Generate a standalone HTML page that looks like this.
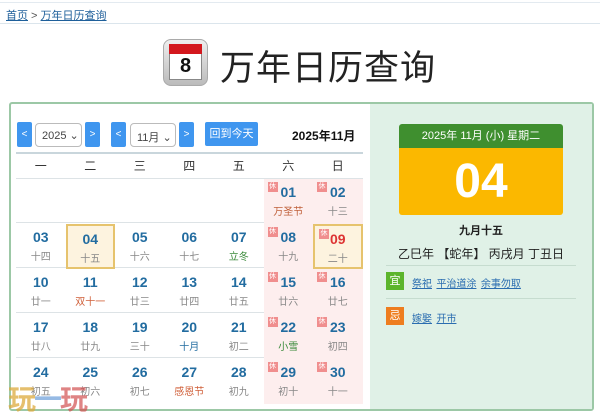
<!DOCTYPE html>
<html><head><meta charset="utf-8"><style>
*{margin:0;padding:0;box-sizing:border-box}
body{width:600px;height:412px;background:#fff;font-family:"Liberation Sans","Noto Sans CJK SC",sans-serif;position:relative;overflow:hidden;color:#333}
.abs{position:absolute}
.crumb{left:0;top:2px;width:600px;height:22px;border-top:1px solid #e3eaf0;border-bottom:1px solid #dbe5ec;font-size:11px;padding:4px 6px;color:#555}
.crumb a{color:#1e5f9a;text-decoration:underline}
.title{left:220px;top:40px;font-size:35px;color:#222;letter-spacing:1px}
.box{left:9px;top:102px;width:585px;height:309px;border:2px solid #9cc8a6;border-radius:3px;background:#fff}
.right{left:370px;top:104px;width:222px;height:305px;background:#e0f1e7}
.btn{background:#3f96ef;color:#fff;font-size:10px;text-align:center;border-radius:2px}
.sel{border:1px solid #bbb;border-radius:4px;background:#fff;font-size:11px;color:#444;padding:5px 0 0 6px}
.cell{position:absolute;width:49.5px;height:45px;text-align:center}
.n{font-size:14px;font-weight:bold;color:#226ca0;margin-top:5px;line-height:16px}
.l{font-size:10px;color:#888;margin-top:3px}
.we{background:#fdeeee}
.xiu{position:absolute;left:4px;top:3px;width:10px;height:10px;background:#f08e8e;color:#fff;font-size:7px;line-height:10px}
.today{border:2px solid #e6c36d;background:#fdf3df}
.wk{position:absolute;top:157px;font-size:12px;color:#333;width:49.5px;text-align:center}
.hl{position:absolute;height:1px;background:#dde3e6}
.lk{color:#2a6db0;text-decoration:underline;font-size:10px}
</style></head><body>
<div class="abs crumb"><a>首页</a> &gt; <a>万年日历查询</a></div>
<div class="abs" style="left:163px;top:39px;width:45px;height:47px;border-radius:8px;background:linear-gradient(#eee,#bbb);border:1px solid #aaa"></div>
<div class="abs" style="left:169px;top:44px;width:33px;height:36px;background:#fff;border:1px solid #888"></div>
<div class="abs" style="left:169px;top:44px;width:33px;height:10px;background:#d3171d"></div>
<div class="abs" style="left:169px;top:55px;width:33px;text-align:center;font-size:20px;font-weight:bold;color:#111">8</div>
<div class="abs title">万年日历查询</div>
<div class="abs box"></div>
<div class="abs right"></div>
<div class="abs btn" style="left:17px;top:122px;width:15px;height:25px;line-height:25px">&lt;</div>
<div class="abs sel" style="left:35px;top:123px;width:47px;height:24px">2025 ⌄</div>
<div class="abs btn" style="left:85px;top:122px;width:15px;height:25px;line-height:25px">&gt;</div>
<div class="abs btn" style="left:111px;top:122px;width:15px;height:25px;line-height:25px">&lt;</div>
<div class="abs sel" style="left:130px;top:123px;width:46px;height:24px">11月 ⌄</div>
<div class="abs btn" style="left:179px;top:122px;width:15px;height:25px;line-height:25px">&gt;</div>
<div class="abs btn" style="left:205px;top:122px;width:53px;height:24px;line-height:24px;font-size:11px">回到今天</div>
<div class="abs" style="left:292px;top:127px;font-size:12px;font-weight:bold;color:#111">2025年11月</div>
<div class="hl" style="left:16px;top:152px;width:347px;background:#c9d6dc;height:2px"></div>
<div class="hl" style="left:16px;top:178px;width:347px"></div>
<div class="hl" style="left:16px;top:222px;width:347px"></div>
<div class="hl" style="left:16px;top:267px;width:347px"></div>
<div class="hl" style="left:16px;top:312px;width:347px"></div>
<div class="hl" style="left:16px;top:357px;width:347px"></div>
<div id="g"></div>
<div class="abs" style="left:399px;top:124px;width:164px;height:24px;background:#3f8f2f;border-radius:3px 3px 0 0;color:#fff;font-size:11px;text-align:center;line-height:24px">2025年 11月 (小) 星期二</div>
<div class="abs" style="left:399px;top:148px;width:164px;height:67px;background:#fbb800;border-radius:0 0 3px 3px;color:#fff;font-size:48px;font-weight:bold;text-align:center;line-height:67px">04</div>
<div class="abs" style="left:370px;top:222px;width:222px;text-align:center;font-size:11px;font-weight:bold;color:#222">九月十五</div>
<div class="abs" style="left:370px;top:245px;width:222px;text-align:center;font-size:12px;color:#222">乙巳年 【蛇年】 丙戌月 丁丑日</div>
<div class="hl" style="left:386px;top:265px;width:190px;background:#c6dccf"></div>
<div class="abs" style="left:386px;top:272px;width:18px;height:18px;background:#5cb52c;color:#fff;font-size:11px;text-align:center;line-height:18px">宜</div>
<div class="abs" style="left:412px;top:274px"><span class="lk">祭祀</span> <span class="lk">平治道涂</span> <span class="lk">余事勿取</span></div>
<div class="hl" style="left:386px;top:298px;width:190px;background:#c6dccf"></div>
<div class="abs" style="left:386px;top:307px;width:18px;height:18px;background:#ee7d1f;color:#fff;font-size:11px;text-align:center;line-height:18px">忌</div>
<div class="abs" style="left:412px;top:309px"><span class="lk">嫁娶</span> <span class="lk">开市</span></div>
<div class="abs" style="left:8px;top:378px;font-size:28px;font-weight:bold;color:rgba(220,170,60,.75);letter-spacing:-2px">玩<span style="color:rgba(80,140,210,.6)">一</span><span style="color:rgba(210,80,80,.7)">玩</span></div>
<script>
var w=['一','二','三','四','五','六','日'],h='';
for(var i=0;i<7;i++)h+='<div class="wk" style="left:'+(16+i*49.5)+'px">'+w[i]+'</div>';
var d=[[],[],[],[],[],['01','万圣节','#c0603a'],['02','十三'],
['03','十四'],['04','十五'],['05','十六'],['06','十七'],['07','立冬','#3a8a3a'],['08','十九'],['09','二十'],
['10','廿一'],['11','双十一','#d0603a'],['12','廿三'],['13','廿四'],['14','廿五'],['15','廿六'],['16','廿七'],
['17','廿八'],['18','廿九'],['19','三十'],['20','十月','#226ca0'],['21','初二'],['22','小雪','#3a8a3a'],['23','初四'],
['24','初五'],['25','初六'],['26','初七'],['27','感恩节','#d0603a'],['28','初九'],['29','初十'],['30','十一']];
for(var k=0;k<35;k++){var c=k%7,r=Math.floor(k/7),x=d[k];var L=16+c*49.5,T=178+r*45;
if(!x.length)continue;var cls='cell'+(c>4?' we':'')+((x[0]=='04'||x[0]=='09')?' today':'');
h+='<div class="'+cls+'" style="left:'+L+'px;top:'+(T+1)+'px">'+(c>4?'<div class="xiu">休</div>':'')+'<div class="n" style="'+(x[0]=='09'?'color:#d33':'')+'">'+x[0]+'</div><div class="l" style="'+(x[2]?'color:'+x[2]:'')+'">'+x[1]+'</div></div>';}
document.getElementById('g').innerHTML=h;
</script>
</body></html>
